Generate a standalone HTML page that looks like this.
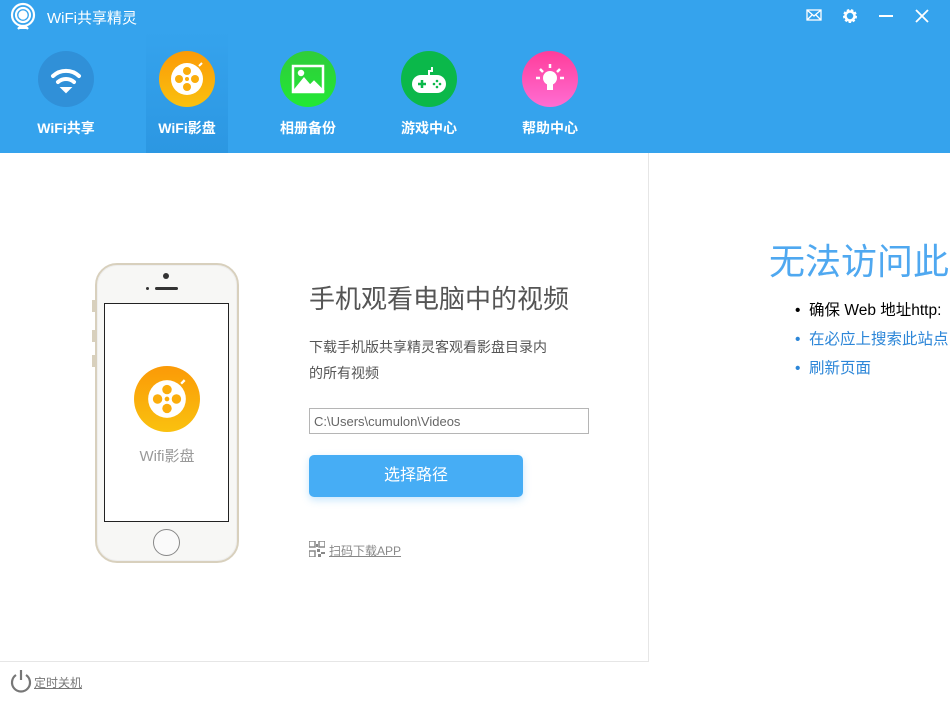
<!DOCTYPE html>
<html><head><meta charset="utf-8"><style>
*{margin:0;padding:0;box-sizing:border-box}
body{width:950px;height:702px;overflow:hidden;background:#fff;font-family:"Liberation Sans","Noto Sans CJK SC",sans-serif;position:relative}
.hdr{position:absolute;left:0;top:0;width:950px;height:153px;background:#35a3ed}
.title{position:absolute;left:47px;top:7px;color:#fff;font-size:15px}
.nav{position:absolute;top:0;width:82px;height:153px;text-align:center}
.nav .c{position:absolute;left:50%;top:51px;width:56px;height:56px;margin-left:-28px;border-radius:50%}
.nav .l{position:absolute;top:118px;width:100%;color:#fff;font-size:14px;font-weight:bold}
.abs{position:absolute}
</style></head><body>
<div class="hdr">
<svg class="abs" style="left:8px;top:2px" width="30" height="30" viewBox="0 0 30 30" fill="none" stroke="#fff" stroke-width="2.2"><circle cx="15" cy="13" r="11"/><circle cx="15" cy="13" r="7"/><circle cx="15" cy="13" r="3.5" fill="#fff"/><path d="M10 27 q5 -6 10 0" fill="#fff"/></svg>
<div class="title">WiFi共享精灵</div>
<svg class="abs" style="left:806px;top:9px" width="16" height="12" viewBox="0 0 16 12" fill="none" stroke="#fff" stroke-width="1.3"><rect x="1" y="1" width="14" height="10"/><path d="M1 1l7 6 7-6M1 11l5-5M15 11l-5-5"/></svg>
<svg class="abs" style="left:842px;top:8px" width="16" height="16" viewBox="0 0 16 16"><circle cx="8" cy="8" r="5.5" fill="none" stroke="#fff" stroke-width="3" stroke-dasharray="2.2 1.6"/><circle cx="8" cy="8" r="4.5" fill="none" stroke="#fff" stroke-width="2.5"/></svg>
<div class="abs" style="left:879px;top:15px;width:14px;height:2px;background:#fff"></div>
<svg class="abs" style="left:915px;top:9px" width="14" height="14" viewBox="0 0 14 14" stroke="#fff" stroke-width="1.8"><path d="M1 1L13 13M13 1L1 13"/></svg>

<div class="nav" style="left:25px"><div class="c" style="background:#3090d8"><svg width="56" height="56" viewBox="0 0 56 56" fill="none" stroke="#fff" stroke-width="4" stroke-linecap="round"><path d="M15 25a19 19 0 0 1 26 0M20 31a12 12 0 0 1 16 0"/><path d="M24 37l4 4 4-4z" fill="#fff" stroke-width="2"/></svg></div><div class="l">WiFi共享</div></div>
<div class="nav" style="left:146px;background:linear-gradient(rgba(40,140,220,0) 20%,#2c97e2 100%)"><div class="c" style="background:linear-gradient(#fb9a07,#fac10f)"><svg width="56" height="56" viewBox="0 0 56 56"><circle cx="28" cy="28" r="16" fill="#fff"/><path d="M40 15l3-3" stroke="#fff" stroke-width="2"/><g fill="#fbad0b"><circle cx="28" cy="20" r="4"/><circle cx="28" cy="36" r="4"/><circle cx="20" cy="28" r="4"/><circle cx="36" cy="28" r="4"/><circle cx="28" cy="28" r="2"/></g></svg></div><div class="l">WiFi影盘</div></div>
<div class="nav" style="left:267px"><div class="c" style="background:linear-gradient(#30cc3a,#22e835)"><svg width="56" height="56" viewBox="0 0 56 56" fill="none" stroke="#fff" stroke-width="2.5"><rect x="13" y="15" width="30" height="26"/><path d="M15 39l9-11 6 7 4-4 8 8z" fill="#fff"/><circle cx="21" cy="22" r="2" fill="#fff"/></svg></div><div class="l">相册备份</div></div>
<div class="nav" style="left:388px"><div class="c" style="background:#0bb84a"><svg width="56" height="56" viewBox="0 0 56 56"><path d="M28 24v-4h3v-4" stroke="#fff" stroke-width="2" fill="none"/><rect x="11" y="24" width="34" height="18" rx="9" fill="#fff"/><path d="M17 33h8M21 29v8" stroke="#0bb84a" stroke-width="2.5"/><g fill="#0bb84a"><circle cx="36" cy="30" r="1.3"/><circle cx="36" cy="36" r="1.3"/><circle cx="33" cy="33" r="1.3"/><circle cx="39" cy="33" r="1.3"/></g></svg></div><div class="l">游戏中心</div></div>
<div class="nav" style="left:509px"><div class="c" style="background:linear-gradient(#ff3d9a,#ff6dd2)"><svg width="56" height="56" viewBox="0 0 56 56" fill="#fff"><circle cx="28" cy="27" r="7"/><rect x="25" y="32" width="6" height="7"/><path d="M28 13v4M18 18l3 3M38 18l-3 3M14 27h4M38 27h4" stroke="#fff" stroke-width="2.5"/></svg></div><div class="l">帮助中心</div></div>
</div>

<div class="abs" style="left:648px;top:153px;width:1px;height:509px;background:#e6e6e6"></div>
<div class="abs" style="left:0;top:661px;width:649px;height:1px;background:#e6e6e6"></div>

<div class="abs" style="left:95px;top:263px;width:144px;height:300px;border-radius:22px;background:#f7f7f5;border:2px solid #d8d0bd;box-shadow:inset 0 0 0 1px #eee"></div>
<div class="abs" style="left:92px;top:300px;width:3px;height:12px;background:#d8d0bd"></div>
<div class="abs" style="left:92px;top:330px;width:3px;height:12px;background:#d8d0bd"></div>
<div class="abs" style="left:92px;top:355px;width:3px;height:12px;background:#d8d0bd"></div>
<div class="abs" style="left:163px;top:273px;width:6px;height:6px;border-radius:50%;background:#333"></div>
<div class="abs" style="left:155px;top:287px;width:23px;height:3px;border-radius:2px;background:#333"></div>
<div class="abs" style="left:146px;top:287px;width:3px;height:3px;border-radius:50%;background:#333"></div>
<div class="abs" style="left:104px;top:303px;width:125px;height:219px;background:#fff;border:1px solid #222"></div>
<div class="abs" style="left:153px;top:529px;width:27px;height:27px;border-radius:50%;border:1.5px solid #888;background:#fafafa"></div>
<div class="abs" style="left:134px;top:366px;width:66px;height:66px;border-radius:50%;background:linear-gradient(#fb9a07,#fac10f)"><svg width="66" height="66" viewBox="0 0 56 56"><circle cx="28" cy="28" r="16" fill="#fff"/><path d="M40 15l3-3" stroke="#fff" stroke-width="2"/><g fill="#fbad0b"><circle cx="28" cy="20" r="4"/><circle cx="28" cy="36" r="4"/><circle cx="20" cy="28" r="4"/><circle cx="36" cy="28" r="4"/><circle cx="28" cy="28" r="2"/></g></svg></div>
<div class="abs" style="left:124px;top:445px;width:86px;text-align:center;color:#999;font-size:15px">Wifi影盘</div>

<div class="abs" style="left:309px;top:279px;font-size:26px;color:#555;white-space:nowrap">手机观看电脑中的视频</div>
<div class="abs" style="left:309px;top:334px;font-size:14px;color:#555;line-height:26px;white-space:nowrap">下载手机版共享精灵客观看影盘目录内<br>的所有视频</div>
<div class="abs" style="left:309px;top:408px;width:280px;height:26px;border:1px solid #b5b5b5;font-size:13px;color:#666;padding:5px 0 0 4px">C:\Users\cumulon\Videos</div>
<div class="abs" style="left:309px;top:455px;width:214px;height:42px;border-radius:5px;background:#46adf5;color:#fff;font-size:16px;text-align:center;line-height:42px;box-shadow:0 3px 8px rgba(70,173,245,.3)">选择路径</div>
<svg class="abs" style="left:309px;top:541px" width="16" height="16" viewBox="0 0 16 16" fill="#888"><rect x="0" y="0" width="6" height="6" fill="none" stroke="#888" stroke-width="1.5"/><rect x="10" y="0" width="6" height="6" fill="none" stroke="#888" stroke-width="1.5"/><rect x="0" y="10" width="6" height="6" fill="none" stroke="#888" stroke-width="1.5"/><rect x="8" y="8" width="3" height="3"/><rect x="12" y="11" width="4" height="2"/><rect x="9" y="13" width="3" height="3"/><rect x="7" y="3" width="2" height="3"/></svg>
<div class="abs" style="left:329px;top:542px;font-size:12px;color:#888;text-decoration:underline">扫码下载APP</div>

<svg class="abs" style="left:9px;top:668px" width="24" height="26" viewBox="0 0 24 26" fill="none" stroke="#777" stroke-width="2.2"><path d="M7 7a9 9 0 1 0 10 0"/><path d="M12 2v10"/></svg>
<div class="abs" style="left:34px;top:674px;font-size:12px;color:#777;text-decoration:underline">定时关机</div>

<div class="abs" style="left:769px;top:233px;font-size:36px;color:#4fa8f0;white-space:nowrap">无法访问此</div>
<div class="abs" style="left:795px;top:296px;font-size:15.5px;line-height:29px;white-space:nowrap">
<div style="color:#000">•&nbsp; 确保 Web 地址http:</div>
<div style="color:#2c86d8">•&nbsp; 在必应上搜索此站点</div>
<div style="color:#2c86d8">•&nbsp; 刷新页面</div>
</div>
</body></html>
